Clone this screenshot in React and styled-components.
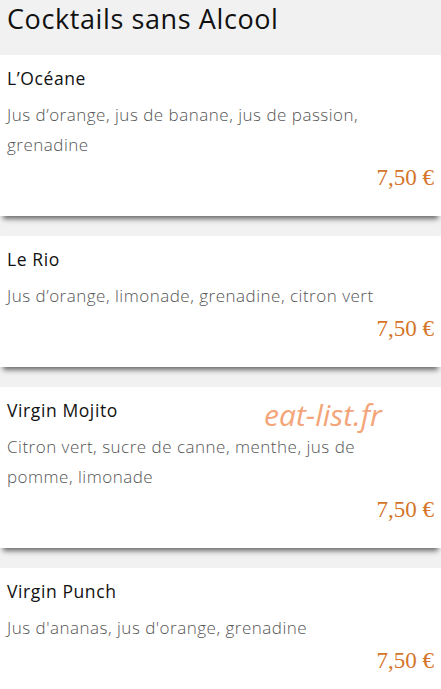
import React from 'react'
import styled, { createGlobalStyle } from 'styled-components'

const GlobalStyle = createGlobalStyle`
  html, body {
    margin: 0;
    padding: 0;
    background: #f1f1f1;
  }
  body {
    font-family: 'Open Sans', sans-serif;
    overflow: hidden;
  }
`

const Page = styled.div`
  position: relative;
  width: 441px;
  min-height: 689px;
`

const Heading = styled.h1`
  margin: 0;
  padding: 0 7px 17px;
  font-size: 27px;
  line-height: 38px;
  font-weight: 400;
  letter-spacing: 0.6px;
  color: #111;
`

const List = styled.div`
  display: flex;
  flex-direction: column;
  gap: 20px;
`

const Card = styled.article`
  background: #fff;
  padding: 10px 7px 23px;
  box-shadow: 0 6px 5px -3px rgba(0, 0, 0, 0.55);
`

const Name = styled.h2`
  margin: 0;
  font-size: 17.5px;
  line-height: 26px;
  font-weight: 500;
  letter-spacing: 0.6px;
  color: #111;
`

const Desc = styled.p`
  margin: 9px 0 0;
  font-size: 17px;
  line-height: 30px;
  font-weight: 300;
  letter-spacing: 0.5px;
  color: #555;
  padding-right: 20px;
`

const Price = styled.div`
  margin-top: 3px;
  text-align: right;
  font-family: 'Liberation Serif', serif;
  font-size: 23px;
  line-height: 30px;
  color: #d4752b;
`

const Watermark = styled.div`
  position: absolute;
  left: 264px;
  top: 394px;
  font-family: 'Open Sans', sans-serif;
  font-style: italic;
  font-size: 30px;
  color: #f3a579;
  pointer-events: none;
`

const drinks = [
  { name: 'L’Océane', desc: 'Jus d’orange, jus de banane, jus de passion, grenadine' },
  { name: 'Le Rio', desc: 'Jus d’orange, limonade, grenadine, citron vert' },
  { name: 'Virgin Mojito', desc: 'Citron vert, sucre de canne, menthe, jus de pomme, limonade' },
  { name: 'Virgin Punch', desc: "Jus d'ananas, jus d'orange, grenadine" },
]

export default function App() {
  return (
    <Page>
      <GlobalStyle />
      <Heading>Cocktails sans Alcool</Heading>
      <List>
        {drinks.map(d => (
          <Card key={d.name}>
            <Name>{d.name}</Name>
            <Desc>{d.desc}</Desc>
            <Price>7,50 €</Price>
          </Card>
        ))}
      </List>
      <Watermark>eat-list.fr</Watermark>
    </Page>
  )
}
